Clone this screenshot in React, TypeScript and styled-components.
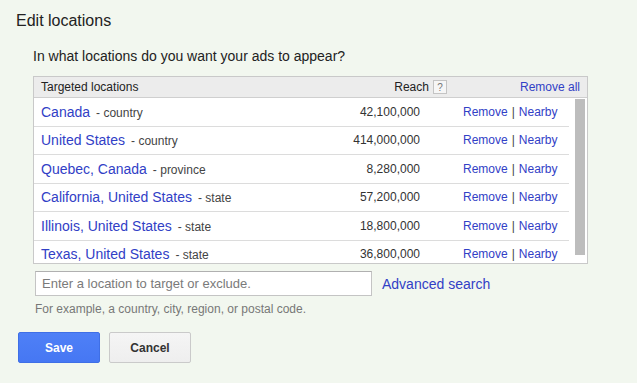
import styled, { createGlobalStyle } from "styled-components"

const locations = [
    { name: "Canada", kind: "country", reach: "42,100,000" },
    { name: "United States", kind: "country", reach: "414,000,000" },
    { name: "Quebec, Canada", kind: "province", reach: "8,280,000" },
    { name: "California, United States", kind: "state", reach: "57,200,000" },
    { name: "Illinois, United States", kind: "state", reach: "18,800,000" },
    { name: "Texas, United States", kind: "state", reach: "36,800,000" }
]

const GlobalStyle = createGlobalStyle`
    html, body {
        margin: 0;
        padding: 0;
        background: #f2f7ef;
    }
    body {
        font-family: "Liberation Sans", Arial, sans-serif;
        color: #222;
    }
`

export default function App () {
    return <Page>
        <GlobalStyle/>
        <Title>Edit locations</Title>
        <Content>
            <Question>In what locations do you want your ads to appear?</Question>
            <Table>
                <HeadRow>
                    <HeadLabel>Targeted locations</HeadLabel>
                    <ReachHead>
                        Reach
                        <HelpBox>?</HelpBox>
                    </ReachHead>
                    <Link $size={12}>Remove all</Link>
                </HeadRow>
                <Body>
                    <List>
                        {
                            locations.map(loc =>
                            <Row key={loc.name}>
                                <NameCell>
                                    <Link $size={14}>{loc.name}</Link>
                                    <Kind>- {loc.kind}</Kind>
                                </NameCell>
                                <ReachCell>{loc.reach}</ReachCell>
                                <Actions>
                                    <Link $size={12}>Remove</Link>
                                    <Sep>|</Sep>
                                    <Link $size={12}>Nearby</Link>
                                </Actions>
                            </Row>)
                        }
                    </List>
                    <Track>
                        <Thumb/>
                    </Track>
                </Body>
            </Table>
            <SearchLine>
                <SearchInput placeholder="Enter a location to target or exclude."/>
                <Link $size={14}>Advanced search</Link>
            </SearchLine>
            <Hint>For example, a country, city, region, or postal code.</Hint>
        </Content>
        <Buttons>
            <Button $primary>Save</Button>
            <Button>Cancel</Button>
        </Buttons>
    </Page>
}

const Page = styled.div`
    width: 637px;
    height: 383px;
    box-sizing: border-box;
    padding: 12px 0 0 16px;
    background: #f2f7ef;
    overflow: hidden;
`

const Title = styled.div`
    font-size: 16px;
    line-height: 18px;
    color: #222;
`

const Content = styled.div`
    margin-left: 17px;
`

const Question = styled.div`
    margin-top: 17px;
    font-size: 14px;
    line-height: 18px;
    color: #222;
`

const Table = styled.div`
    margin-top: 11px;
    width: 553px;
    border: 1px solid #c9c9c9;
    background: #fff;
`

const HeadRow = styled.div`
    display: flex;
    align-items: center;
    height: 20px;
    padding: 0 7px 0 7px;
    background: #ececec;
    border-bottom: 1px solid #cfcfcf;
    font-size: 12px;
    color: #222;
`

const HeadLabel = styled.div`
    flex: 1;
`

const ReachHead = styled.div`
    display: flex;
    align-items: center;
    margin-right: 73px;
`

const HelpBox = styled.span`
    display: inline-flex;
    align-items: center;
    justify-content: center;
    width: 12px;
    height: 12px;
    margin-left: 4px;
    border: 1px solid #c4c4c4;
    background: #f6f6f6;
    color: #777;
    font-size: 10px;
`

const Link = styled.a<{ $size: number }>`
    color: #3140c6;
    font-size: ${p => p.$size}px;
    cursor: pointer;
    white-space: nowrap;
`

const Body = styled.div`
    display: flex;
    height: 165px;
    overflow: hidden;
`

const List = styled.div`
    flex: 1;
`

const Row = styled.div`
    display: grid;
    grid-template-columns: 1fr 150px 106px;
    align-items: center;
    height: 28.5px;
    box-sizing: border-box;
    padding-left: 7px;
    border-bottom: 1px solid #dcdcdc;
`

const NameCell = styled.div`
    white-space: nowrap;
`

const Kind = styled.span`
    margin-left: 6px;
    font-size: 12px;
    color: #444;
`

const ReachCell = styled.div`
    text-align: right;
    padding-right: 43px;
    font-size: 12px;
    color: #333;
`

const Actions = styled.div`
    display: flex;
    align-items: center;
`

const Sep = styled.span`
    margin: 0 4px;
    font-size: 12px;
    color: #444;
`

const Track = styled.div`
    width: 18px;
    padding: 1px 2px 8px 6px;
    box-sizing: border-box;
`

const Thumb = styled.div`
    width: 10px;
    height: 156px;
    background: #bdbdbd;
`

const SearchLine = styled.div`
    display: flex;
    align-items: center;
    gap: 10px;
    margin-top: 7px;
    margin-left: 2px;
`

const SearchInput = styled.input`
    width: 337px;
    height: 25px;
    box-sizing: border-box;
    padding: 0 6px;
    border: 1px solid #c4c4c4;
    border-top-color: #b0b0b0;
    background: #fff;
    font-family: "Liberation Sans", Arial, sans-serif;
    font-size: 13px;
    outline: none;
    &::placeholder {
        color: #7a7a7a;
    }
`

const Hint = styled.div`
    margin-top: 6px;
    margin-left: 2px;
    font-size: 12px;
    line-height: 14px;
    color: #777;
`

const Buttons = styled.div`
    display: flex;
    gap: 9px;
    margin-top: 16px;
    margin-left: 2px;
`

const Button = styled.button<{ $primary?: boolean }>`
    width: 82px;
    height: 31px;
    border-radius: 2px;
    border: 1px solid ${p => p.$primary ? "#3f6fe6" : "#cacaca"};
    background: ${p => p.$primary ? "linear-gradient(#4e80f7, #4677f3)" : "linear-gradient(#f5f5f5, #eeeeee)"};
    color: ${p => p.$primary ? "#fff" : "#333"};
    font-family: "Liberation Sans", Arial, sans-serif;
    font-size: 12px;
    font-weight: bold;
    cursor: pointer;
`
